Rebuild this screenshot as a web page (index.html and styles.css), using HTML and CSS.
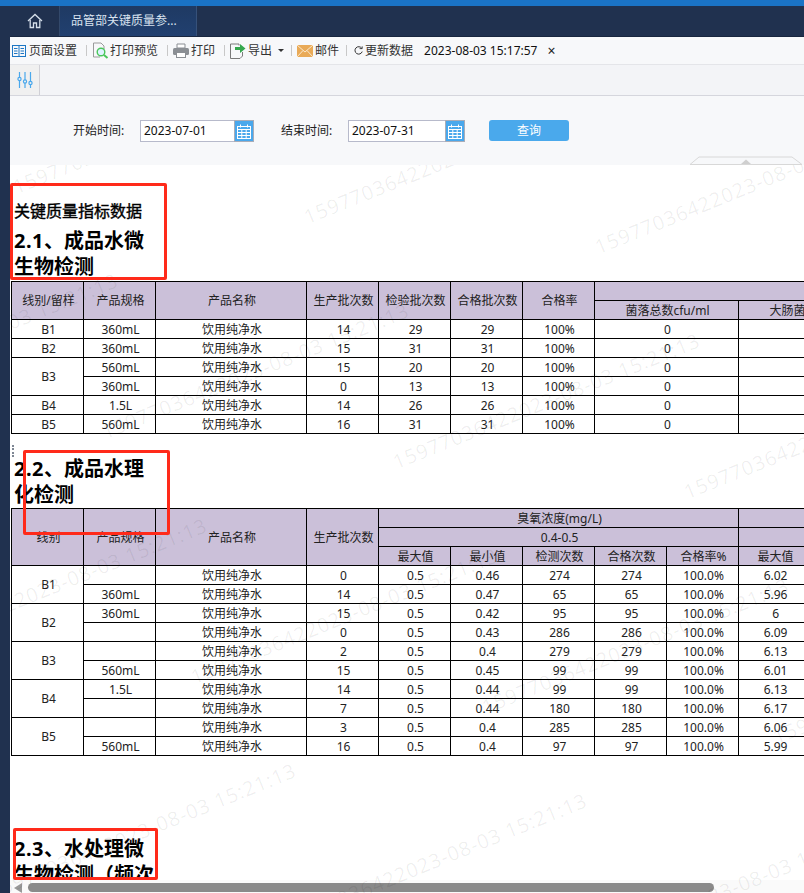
FILE: index.html
```html
<!DOCTYPE html>
<html lang="zh-CN">
<head>
<meta charset="utf-8">
<title>品管部关键质量参数</title>
<link rel="stylesheet" href="styles.css">
</head>
<body>
<div class="topline"></div>
<div class="shell">
  <div class="rail"></div>
  <div class="main">
    <nav class="tabs">
      <div class="tab-home">
        <svg width="16" height="16" viewBox="0 0 16 16" fill="none" stroke="#d5dfea" stroke-width="1.3"><path d="M1 8 8 1.5 15 8"/><path d="M3.2 6.8V14.5H6.5V10H9.5V14.5H12.8V6.8"/></svg>
      </div>
      <div class="tab-doc">品管部关键质量参...</div>
    </nav>
    <div class="toolbar">
      <span class="tool first">
        <svg width="14" height="12" viewBox="0 0 14 12" fill="none" stroke="#1c76c4" stroke-width="1"><rect x=".5" y=".5" width="13" height="11"/><path d="M7 .5V11.5M2 3.5H5.5M2 6H5.5M2 8.5H5.5M8.5 3.5H12M8.5 6H12M8.5 8.5H12"/></svg>
        页面设置</span>
      <i class="sep"></i>
      <span class="tool tool-tight">
        <svg width="17" height="17" viewBox="0 0 17 17" fill="none"><path d="M1.5 1H9L12 4V7M1.5 1V15H8" stroke="#9a9a9a"/><circle cx="9" cy="10" r="3.8" stroke="#49c65a" stroke-width="1.4" fill="#dff2ff"/><path d="M12 13 15.5 16" stroke="#49c65a" stroke-width="2"/></svg>
        打印预览</span>
      <i class="sep"></i>
      <span class="tool">
        <svg width="16" height="15" viewBox="0 0 16 15"><path d="M4 1H12V5H4Z" fill="#fff" stroke="#8b8f94"/><rect x="0" y="5" width="16" height="7" rx="1.5" fill="#8b8f94"/><rect x="3.5" y="9.5" width="9" height="5" fill="#fff" stroke="#8b8f94"/></svg>
        打印</span>
      <i class="sep"></i>
      <span class="tool">
        <svg width="16" height="17" viewBox="0 0 16 17" fill="none"><path d="M.5 2H9V3.5M.5 2V16.5H10L12.5 14V10" stroke="#7a7a7a"/><path d="M5 5H10V2L15.5 6.5 10 11V8H5Z" fill="#35a84e"/></svg>
        导出<b class="caret"></b></span>
      <i class="sep sep-mail"></i>
      <span class="tool">
        <svg width="16" height="12" viewBox="0 0 16 12"><rect width="16" height="12" fill="#e9aa57"/><path d="M0 0 8 7 16 0M0 12 6 5.5M16 12 10 5.5" fill="none" stroke="#fbe8cc"/></svg>
        邮件</span>
      <i class="sep sep-refresh"></i>
      <span class="tool tool-refresh">
        <svg width="9" height="9" viewBox="0 0 9 9" fill="none" stroke="#333"><path d="M7.8 2.4A3.7 3.7 0 1 0 8.2 5.6"/><path d="M5.6 2.6H8.2V.4" stroke-width=".9"/></svg>
        更新数据</span>
      <span class="stamp">2023-08-03 15:17:57</span>
      <span class="close">×</span>
    </div>
    <div class="filter-strip">
      <div class="filter-tab">
        <svg width="16" height="17" viewBox="0 0 16 17" fill="none" stroke="#4aa8ec" stroke-width="1.2"><path d="M2.5 0V5.5M2.5 8.5V16M8 0V8M8 11V16M13.5 0V9.5M13.5 12.5V16"/><circle cx="2.5" cy="7" r="1.6"/><circle cx="8" cy="9.5" r="1.6"/><circle cx="13.5" cy="11" r="1.6"/></svg>
      </div>
    </div>
    <form class="params">
      <label class="param-label">开始时间:</label>
      <div class="date-field">
        <span class="date-value">2023-07-01</span>
        <span class="date-btn"><svg width="14" height="15" viewBox="0 0 14 15" fill="none" stroke="#fff"><rect x=".5" y="2.5" width="13" height="12"/><path d="M.5 5.5H13.5M.5 8.5H13.5M.5 11.5H13.5M4.8 5.5V14.5M9.2 5.5V14.5M3.5 .5V3.5M10.5 .5V3.5"/></svg></span>
      </div>
      <label class="param-label second">结束时间:</label>
      <div class="date-field wide">
        <span class="date-value">2023-07-31</span>
        <span class="date-btn"><svg width="14" height="15" viewBox="0 0 14 15" fill="none" stroke="#fff"><rect x=".5" y="2.5" width="13" height="12"/><path d="M.5 5.5H13.5M.5 8.5H13.5M.5 11.5H13.5M4.8 5.5V14.5M9.2 5.5V14.5M3.5 .5V3.5M10.5 .5V3.5"/></svg></span>
      </div>
      <button class="query" type="button">查询</button>
      <svg class="collapse" width="114" height="9" viewBox="0 0 114 9" fill="none"><path d="M1 8.5 10 1H103L113 8.5" stroke="#d8d8d8"/><path d="M1 8.5H113" stroke="#d8d8d8"/><path d="M52 8 57 3.5 62 8Z" fill="#cfcfcf"/></svg>
    </form>
    <div class="report">
      <div class="report-body">
        <p class="report-title">关键质量指标数据</p>
        <h2 class="sec sec-1"><span class="num">2.1</span>、成品水微生物检测</h2>
        <table class="grid grid-1">
          <colgroup><col class="c72"><col class="c72"><col class="c151"><col class="c72"><col class="c72"><col class="c72"><col class="c72"><col class="c144"><col class="c144"></colgroup>
          <thead>
            <tr><th rowspan="2">线别/留样</th><th rowspan="2">产品规格</th><th rowspan="2">产品名称</th><th rowspan="2">生产批次数</th><th rowspan="2">检验批次数</th><th rowspan="2">合格批次数</th><th rowspan="2">合格率</th><th colspan="2"></th></tr>
            <tr><th>菌落总数cfu/ml</th><th>大肠菌群cfu/ml</th></tr>
          </thead>
          <tbody>
            <tr><td>B1</td><td>360mL</td><td>饮用纯净水</td><td>14</td><td>29</td><td>29</td><td>100%</td><td>0</td><td></td></tr>
            <tr><td>B2</td><td>360mL</td><td>饮用纯净水</td><td>15</td><td>31</td><td>31</td><td>100%</td><td>0</td><td></td></tr>
            <tr><td rowspan="2">B3</td><td>560mL</td><td>饮用纯净水</td><td>15</td><td>20</td><td>20</td><td>100%</td><td>0</td><td></td></tr>
            <tr><td>360mL</td><td>饮用纯净水</td><td>0</td><td>13</td><td>13</td><td>100%</td><td>0</td><td></td></tr>
            <tr><td>B4</td><td>1.5L</td><td>饮用纯净水</td><td>14</td><td>26</td><td>26</td><td>100%</td><td>0</td><td></td></tr>
            <tr><td>B5</td><td>560mL</td><td>饮用纯净水</td><td>16</td><td>31</td><td>31</td><td>100%</td><td>0</td><td></td></tr>
          </tbody>
        </table>
        <h2 class="sec sec-2"><span class="num">2.2</span>、成品水理化检测</h2>
        <table class="grid grid-2">
          <colgroup><col class="c72"><col class="c72"><col class="c151"><col class="c72"><col class="c72"><col class="c72"><col class="c72"><col class="c72"><col class="c72"><col class="c72"></colgroup>
          <thead>
            <tr><th rowspan="3">线别</th><th rowspan="3">产品规格</th><th rowspan="3">产品名称</th><th rowspan="3">生产批次数</th><th colspan="5">臭氧浓度(mg/L)</th><th></th></tr>
            <tr><th colspan="5">0.4-0.5</th><th></th></tr>
            <tr><th>最大值</th><th>最小值</th><th>检测次数</th><th>合格次数</th><th>合格率%</th><th>最大值</th></tr>
          </thead>
          <tbody>
            <tr><td rowspan="2">B1</td><td></td><td>饮用纯净水</td><td>0</td><td>0.5</td><td>0.46</td><td>274</td><td>274</td><td>100.0%</td><td>6.02</td></tr>
            <tr><td>360mL</td><td>饮用纯净水</td><td>14</td><td>0.5</td><td>0.47</td><td>65</td><td>65</td><td>100.0%</td><td>5.96</td></tr>
            <tr><td rowspan="2">B2</td><td>360mL</td><td>饮用纯净水</td><td>15</td><td>0.5</td><td>0.42</td><td>95</td><td>95</td><td>100.0%</td><td>6</td></tr>
            <tr><td></td><td>饮用纯净水</td><td>0</td><td>0.5</td><td>0.43</td><td>286</td><td>286</td><td>100.0%</td><td>6.09</td></tr>
            <tr><td rowspan="2">B3</td><td></td><td>饮用纯净水</td><td>2</td><td>0.5</td><td>0.4</td><td>279</td><td>279</td><td>100.0%</td><td>6.13</td></tr>
            <tr><td>560mL</td><td>饮用纯净水</td><td>15</td><td>0.5</td><td>0.45</td><td>99</td><td>99</td><td>100.0%</td><td>6.01</td></tr>
            <tr><td rowspan="2">B4</td><td>1.5L</td><td>饮用纯净水</td><td>14</td><td>0.5</td><td>0.44</td><td>99</td><td>99</td><td>100.0%</td><td>6.13</td></tr>
            <tr><td></td><td>饮用纯净水</td><td>7</td><td>0.5</td><td>0.44</td><td>180</td><td>180</td><td>100.0%</td><td>6.17</td></tr>
            <tr><td rowspan="2">B5</td><td></td><td>饮用纯净水</td><td>3</td><td>0.5</td><td>0.4</td><td>285</td><td>285</td><td>100.0%</td><td>6.06</td></tr>
            <tr><td>560mL</td><td>饮用纯净水</td><td>16</td><td>0.5</td><td>0.4</td><td>97</td><td>97</td><td>100.0%</td><td>5.99</td></tr>
          </tbody>
        </table>
        <h2 class="sec sec-3"><span class="num">2.3</span>、水处理微生物检测（频次</h2>
      </div>
      <div class="hscroll">
        <svg class="hscroll-arrow" width="8" height="10" viewBox="0 0 8 10"><path d="M8 0V10L0 5Z" fill="#999"/></svg>
        <div class="hscroll-thumb"></div>
      </div>
      <div class="watermarks" aria-hidden="true">
        <span class="wm wm-a">15977036422023-08-03 15:21:13</span>
        <span class="wm wm-b">15977036422023-08-03 15:21:13</span>
        <span class="wm wm-c">15977036422023-08-03 15:21:13</span>
        <span class="wm wm-d">15977036422023-08-03 15:21:13</span>
        <span class="wm wm-e">15977036422023-08-03 15:21:13</span>
        <span class="wm wm-f">15977036422023-08-03 15:21:13</span>
        <span class="wm wm-g">15977036422023-08-03 15:21:13</span>
        <span class="wm wm-h">15977036422023-08-03 15:21:13</span>
        <span class="wm wm-i">15977036422023-08-03 15:21:13</span>
        <span class="wm wm-j">15977036422023-08-03 15:21:13</span>
        <span class="wm wm-k">15977036422023-08-03 15:21:13</span>
        <span class="wm wm-l">15977036422023-08-03 15:21:13</span>
        <span class="wm wm-m">15977036422023-08-03 15:21:13</span>
        <span class="wm wm-n">15977036422023-08-03 15:21:13</span>
      </div>
      <div class="splitter"></div>
      <div class="mark mark-1"></div>
      <div class="mark mark-2"></div>
      <div class="mark mark-3"></div>
    </div>
  </div>
</div>
</body>
</html>
```
FILE: styles.css
```css
* { box-sizing: border-box; }
html, body { margin: 0; padding: 0; }
body {
  width: 804px;
  height: 893px;
  overflow: hidden;
  background: #fff;
  color: #222;
  font: 12px/18px "Noto Sans", "Noto Sans CJK SC", sans-serif;
  display: flex;
  flex-direction: column;
}
.topline { height: 6px; background: #1a73c6; flex: none; }
.shell { flex: 1; display: flex; min-height: 0; }
.rail { width: 10px; flex: none; background: #20314f; }
.main { flex: 1; min-width: 0; display: flex; flex-direction: column; }

.tabs { height: 31px; flex: none; display: flex; background: #20314f; border-bottom: 1px solid #18263f; }
.tab-home { width: 50px; display: flex; align-items: center; justify-content: center; border-right: 1px solid #33496b; }
.tab-doc {
  width: 137px; padding-left: 11px; color: #d9e3ef; line-height: 29px;
  background: linear-gradient(#1f3a63, #214070);
  border-right: 1px solid #36517a;
}

.toolbar { height: 28px; flex: none; display: flex; align-items: center; padding-left: 2px; background: #f7f8fa; border-bottom: 1px solid #e4e5e9; color: #333; }
.tool { display: flex; align-items: center; gap: 2px; white-space: nowrap; }
.tool.first { gap: 3px; }
.tool-tight { gap: 1px; }
.tool-refresh { gap: 2px; margin-left: 7px; }
.sep { width: 1px; height: 11px; background: #c8c8c8; margin: 0 5px 0 9px; flex: none; }
.sep-mail { margin-left: 7px; }
.sep-refresh { margin: 0 0 0 7px; }
.caret { display: inline-block; margin-left: 4px; border: 3px solid transparent; border-top: 3px solid #333; border-bottom: 0; }
.stamp { margin-left: 11px; color: #111; font-size: 12px; }
.close { margin-left: 10px; color: #222; font-size: 14px; }

.filter-strip { height: 31px; flex: none; background: #f3f4f7; border-bottom: 1px solid #d5d6dd; }
.filter-tab { width: 30px; height: 30px; display: flex; align-items: center; justify-content: center; background: #f0f0f0; border-right: 1px solid #d0d0d6; }

.params { height: 69px; flex: none; position: relative; display: flex; align-items: flex-start; padding: 24px 0 0 63px; background: #f7f8fa; color: #222; }
.param-label { width: 67px; line-height: 21px; }
.param-label.second { margin-left: 27px; }
.date-field { width: 114px; height: 22px; display: flex; border: 1px solid #b7bacb; background: #fff; }
.date-field.wide { width: 117px; }
.date-value { flex: 1; padding-left: 3px; line-height: 20px; color: #111; }
.date-btn { width: 20px; display: flex; align-items: center; justify-content: center; background: #4aa8ec; margin: -1px -1px -1px 0; border: 1px solid #a9adb8; }
.query { margin-left: 24px; width: 80px; height: 21px; padding: 0; border: 0; border-radius: 3px; background: #4aa9ec; color: #fff; font: inherit; line-height: 21px; }
.collapse { position: absolute; right: 1px; bottom: 0; }

.report { flex: 1; min-height: 0; display: flex; flex-direction: column; position: relative; background: #fff; overflow: hidden; }
.report-body { flex: 1; min-height: 0; overflow: hidden; padding-left: 1px; }
.report-title { margin: 34px 0 0; padding-left: 3px; font-size: 16px; line-height: 24px; color: #000; -webkit-text-stroke: .4px #000; }
.sec { margin: 0; padding-left: 3px; width: 143px; font-size: 20px; line-height: 26px; font-weight: 700; color: #000; }
.num { letter-spacing: .5px; }
.sec-1 { margin: 5px 0 1px; }
.sec-2 { margin: 22px 0 0; }
.sec-3 { margin: 80px 0 0; width: 148px; }

.grid { border-collapse: collapse; table-layout: fixed; text-align: center; color: #222; }
.grid-1 { width: 871px; }
.grid-2 { width: 799px; }
.c72 { width: 72px; }
.c144 { width: 144px; }
.c151 { width: 151px; }
.grid th, .grid td { padding: 0 0 0 2px; height: 19px; line-height: 17px; border: 1px solid #000; font-weight: 400; font-size: 12px; overflow: hidden; white-space: nowrap; }
.grid th { background: #cbc0d9; }

.hscroll { height: 13px; flex: none; position: relative; display: flex; align-items: center; background: rgba(247,247,247,.6); }
.hscroll-arrow { position: absolute; left: 4px; top: 3px; }
.hscroll-thumb { position: absolute; left: 18px; top: 3px; width: 686px; height: 9px; border-radius: 5px; background: #8a8a8a; }

.watermarks { position: absolute; inset: 0; pointer-events: none; overflow: hidden; }
.wm { position: absolute; white-space: nowrap; font: 20px/28px "Open Sans", sans-serif; letter-spacing: .9px; color: rgba(0,0,0,.065); transform: rotate(-22deg); transform-origin: 0 50%; }
/* watermark anchors: start of each text, page coords minus report origin (10,165) */
.wm-a { left: 4px; top: 9px; }
.wm-b { left: 295px; top: 39px; }
.wm-c { left: 586px; top: 69px; }
.wm-d { left: -198px; top: 224px; }
.wm-e { left: 93px; top: 254px; }
.wm-f { left: 384px; top: 284px; }
.wm-g { left: 675px; top: 314px; }
.wm-h { left: -109px; top: 469px; }
.wm-i { left: 182px; top: 499px; }
.wm-j { left: 473px; top: 529px; }
.wm-k { left: 764px; top: 559px; }
.wm-l { left: -20px; top: 714px; }
.wm-m { left: 271px; top: 744px; }
.wm-n { left: 562px; top: 774px; }

.splitter { position: absolute; left: -4px; top: 280px; width: 8px; height: 12px; border-left: 2px dotted #7e8794; border-right: 2px dotted #7e8794; }
.mark { position: absolute; border: 3px solid #ff2a1a; border-radius: 2px; pointer-events: none; }
.mark-1 { left: 0; top: 18px; width: 157px; height: 97px; }
.mark-2 { left: 13px; top: 285px; width: 147px; height: 85px; }
.mark-3 { left: 3px; top: 663px; width: 145px; height: 52px; }
```
